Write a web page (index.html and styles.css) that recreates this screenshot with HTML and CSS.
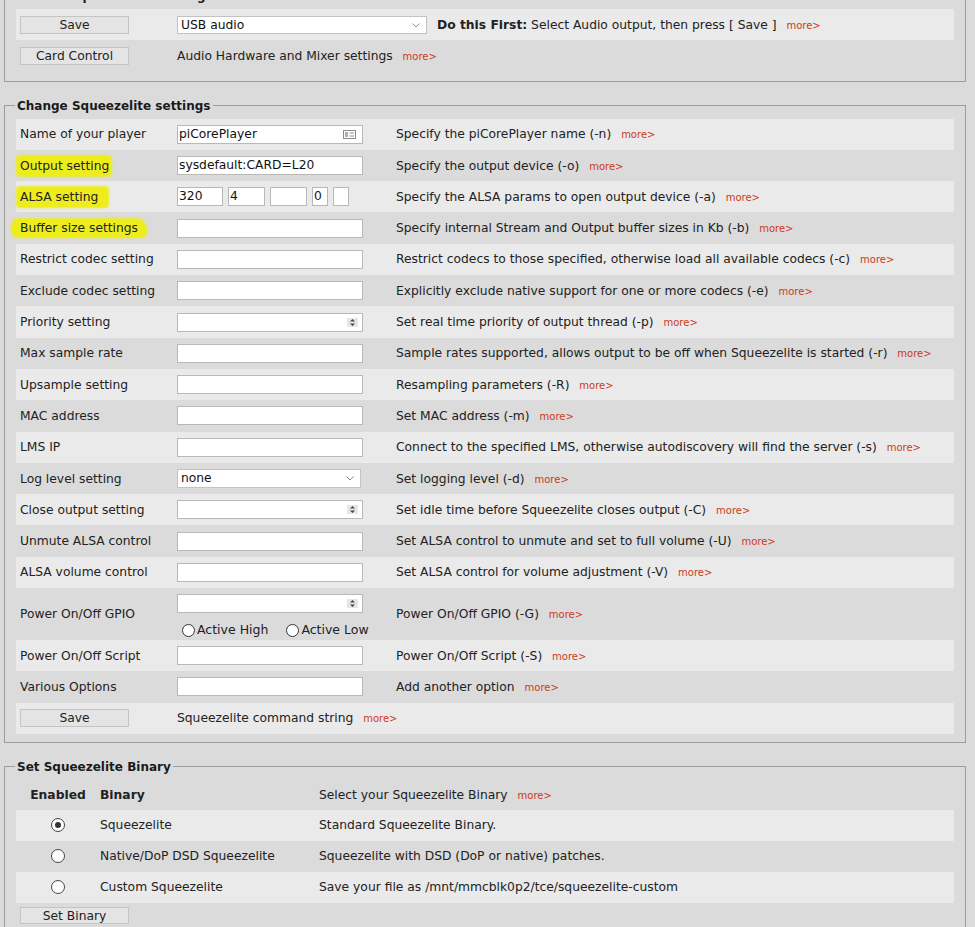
FILE: index.html
```html
<!DOCTYPE html>
<html>
<head>
<meta charset="utf-8">
<link rel="stylesheet" href="styles.css">
</head>
<body>
<div class="page">

<fieldset class="box first">
  <legend>Audio output device settings</legend>
  <div class="row light top1">
    <div class="cell lbl"><button class="btn">Save</button></div>
    <div class="cell"><div class="select wide"><span>USB audio</span><svg class="chev" width="8" height="5" viewBox="0 0 8 5"><path d="M0.5 0.5 L4 4 L7.5 0.5" fill="none" stroke="#8a8a8a" stroke-width="1"/></svg></div></div>
    <div class="cell desc"><b>Do this First:</b>&nbsp;Select Audio output, then press [ Save ] <a class="more">more&gt;</a></div>
  </div>
  <div class="row top2">
    <div class="cell lbl"><button class="btn">Card Control</button></div>
    <div class="cell desc0">Audio Hardware and Mixer settings <a class="more">more&gt;</a></div>
  </div>
</fieldset>

<fieldset class="box">
  <legend>Change Squeezelite settings</legend>
  <div class="row light">
    <div class="cell lbl">Name of your player</div>
    <div class="cell"><div class="inp has-icon"><span>piCorePlayer</span><svg class="ico" width="13" height="9" viewBox="0 0 13 9"><rect x="0.5" y="0.5" width="12" height="8" fill="none" stroke="#8c8c8c"/><rect x="2" y="2" width="3" height="5" fill="#b0b0b0"/><path d="M6.5 3h4.5M6.5 6h4.5" stroke="#8c8c8c"/></svg></div></div>
    <div class="cell desc">Specify the piCorePlayer name (-n) <a class="more">more&gt;</a></div>
  </div>
  <div class="row">
    <div class="cell lbl"><span class="hl">Output setting</span></div>
    <div class="cell"><div class="inp"><span>sysdefault:CARD=L20</span></div></div>
    <div class="cell desc">Specify the output device (-o) <a class="more">more&gt;</a></div>
  </div>
  <div class="row light">
    <div class="cell lbl"><span class="hl hl2">ALSA setting</span></div>
    <div class="cell alsa">
      <div class="inp a1"><span>320</span></div>
      <div class="inp a2"><span>4</span></div>
      <div class="inp a3"></div>
      <div class="inp a4"><span>0</span></div>
      <div class="inp a5"></div>
    </div>
    <div class="cell desc">Specify the ALSA params to open output device (-a) <a class="more">more&gt;</a></div>
  </div>
  <div class="row">
    <div class="cell lbl"><span class="hl hl3">Buffer size settings</span></div>
    <div class="cell"><div class="inp"></div></div>
    <div class="cell desc">Specify internal Stream and Output buffer sizes in Kb (-b) <a class="more">more&gt;</a></div>
  </div>
  <div class="row light">
    <div class="cell lbl">Restrict codec setting</div>
    <div class="cell"><div class="inp"></div></div>
    <div class="cell desc">Restrict codecs to those specified, otherwise load all available codecs (-c) <a class="more">more&gt;</a></div>
  </div>
  <div class="row">
    <div class="cell lbl">Exclude codec setting</div>
    <div class="cell"><div class="inp"></div></div>
    <div class="cell desc">Explicitly exclude native support for one or more codecs (-e) <a class="more">more&gt;</a></div>
  </div>
  <div class="row light">
    <div class="cell lbl">Priority setting</div>
    <div class="cell"><div class="inp num"><svg class="spin" width="11" height="9" viewBox="0 0 11 9"><rect x="0" y="0" width="11" height="9" fill="#e6e6e6"/><path d="M3 3.5 L5.5 1 L8 3.5Z M3 5.5 L5.5 8 L8 5.5Z" fill="#444"/></svg></div></div>
    <div class="cell desc">Set real time priority of output thread (-p) <a class="more">more&gt;</a></div>
  </div>
  <div class="row">
    <div class="cell lbl">Max sample rate</div>
    <div class="cell"><div class="inp"></div></div>
    <div class="cell desc">Sample rates supported, allows output to be off when Squeezelite is started (-r) <a class="more">more&gt;</a></div>
  </div>
  <div class="row light">
    <div class="cell lbl">Upsample setting</div>
    <div class="cell"><div class="inp"></div></div>
    <div class="cell desc">Resampling parameters (-R) <a class="more">more&gt;</a></div>
  </div>
  <div class="row">
    <div class="cell lbl">MAC address</div>
    <div class="cell"><div class="inp"></div></div>
    <div class="cell desc">Set MAC address (-m) <a class="more">more&gt;</a></div>
  </div>
  <div class="row light">
    <div class="cell lbl">LMS IP</div>
    <div class="cell"><div class="inp"></div></div>
    <div class="cell desc">Connect to the specified LMS, otherwise autodiscovery will find the server (-s) <a class="more">more&gt;</a></div>
  </div>
  <div class="row">
    <div class="cell lbl">Log level setting</div>
    <div class="cell"><div class="select loglvl"><span>none</span><svg class="chev" width="8" height="5" viewBox="0 0 8 5"><path d="M0.5 0.5 L4 4 L7.5 0.5" fill="none" stroke="#8a8a8a" stroke-width="1"/></svg></div></div>
    <div class="cell desc">Set logging level (-d) <a class="more">more&gt;</a></div>
  </div>
  <div class="row light">
    <div class="cell lbl">Close output setting</div>
    <div class="cell"><div class="inp num"><svg class="spin" width="11" height="9" viewBox="0 0 11 9"><rect x="0" y="0" width="11" height="9" fill="#e6e6e6"/><path d="M3 3.5 L5.5 1 L8 3.5Z M3 5.5 L5.5 8 L8 5.5Z" fill="#444"/></svg></div></div>
    <div class="cell desc">Set idle time before Squeezelite closes output (-C) <a class="more">more&gt;</a></div>
  </div>
  <div class="row">
    <div class="cell lbl">Unmute ALSA control</div>
    <div class="cell"><div class="inp"></div></div>
    <div class="cell desc">Set ALSA control to unmute and set to full volume (-U) <a class="more">more&gt;</a></div>
  </div>
  <div class="row light">
    <div class="cell lbl">ALSA volume control</div>
    <div class="cell"><div class="inp"></div></div>
    <div class="cell desc">Set ALSA control for volume adjustment (-V) <a class="more">more&gt;</a></div>
  </div>
  <div class="row tall">
    <div class="cell lbl">Power On/Off GPIO</div>
    <div class="cell gpio">
      <div class="inp num"><svg class="spin" width="11" height="9" viewBox="0 0 11 9"><rect x="0" y="0" width="11" height="9" fill="#e6e6e6"/><path d="M3 3.5 L5.5 1 L8 3.5Z M3 5.5 L5.5 8 L8 5.5Z" fill="#444"/></svg></div>
      <div class="radios">
        <span class="ropt"><span class="radio"></span>Active High</span>
        <span class="ropt"><span class="radio"></span>Active Low</span>
      </div>
    </div>
    <div class="cell desc">Power On/Off GPIO (-G) <a class="more">more&gt;</a></div>
  </div>
  <div class="row light">
    <div class="cell lbl">Power On/Off Script</div>
    <div class="cell"><div class="inp"></div></div>
    <div class="cell desc">Power On/Off Script (-S) <a class="more">more&gt;</a></div>
  </div>
  <div class="row">
    <div class="cell lbl">Various Options</div>
    <div class="cell"><div class="inp"></div></div>
    <div class="cell desc">Add another option <a class="more">more&gt;</a></div>
  </div>
  <div class="row light">
    <div class="cell lbl"><button class="btn">Save</button></div>
    <div class="cell desc0 wide-desc">Squeezelite command string <a class="more">more&gt;</a></div>
  </div>
</fieldset>

<fieldset class="box last">
  <legend>Set Squeezelite Binary</legend>
  <div class="brow head">
    <div class="bc en"><b>Enabled</b></div>
    <div class="bc"><b>Binary</b></div>
    <div class="bc bdesc">Select your Squeezelite Binary <a class="more">more&gt;</a></div>
  </div>
  <div class="brow light">
    <div class="bc en"><span class="radio big checked"></span></div>
    <div class="bc">Squeezelite</div>
    <div class="bc bdesc">Standard Squeezelite Binary.</div>
  </div>
  <div class="brow">
    <div class="bc en"><span class="radio big"></span></div>
    <div class="bc">Native/DoP DSD Squeezelite</div>
    <div class="bc bdesc">Squeezelite with DSD (DoP or native) patches.</div>
  </div>
  <div class="brow light">
    <div class="bc en"><span class="radio big"></span></div>
    <div class="bc">Custom Squeezelite</div>
    <div class="bc bdesc">Save your file as /mnt/mmcblk0p2/tce/squeezelite-custom</div>
  </div>
  <div class="setbin"><button class="btn">Set Binary</button></div>
</fieldset>

</div>
</body>
</html>
```
FILE: styles.css
```css
html, body {
  margin: 0;
  padding: 0;
  background: #dbdbdb;
}
body {
  font-family: "DejaVu Sans", Verdana, sans-serif;
  font-size: 12.3px;
  color: #222;
  overflow: hidden;
}
.page {
  width: 962px;
  margin: -12px 0 0 4px;
}
.box {
  margin: 0 0 16px;
  padding: 5px 11px 8px;
  border: 1px solid #9d9d9d;
  min-width: 0;
}
.box.first {
  padding-bottom: 9px;
}
.box legend {
  font-weight: bold;
  font-size: 12px;
  line-height: 16px;
  padding: 0 2px;
  margin-left: -1px;
  color: #1a1a1a;
}
.row {
  display: grid;
  grid-template-columns: 161px 215px 1fr;
  align-items: center;
  height: 31.3px;
}
.row.light, .brow.light {
  background: #eaeaea;
}
.row.top1 {
  grid-template-columns: 161px 256px 1fr;
}
.row.top2 {
  grid-template-columns: 161px 1fr;
}
.row.tall {
  height: 52px;
}
.cell {
  white-space: nowrap;
}
.lbl {
  padding-left: 4px;
}
.desc {
  padding-left: 4px;
}
.desc0 {
  padding-left: 0;
}
.more {
  color: #cc3a1a;
  font-size: 10px;
  margin-left: 6px;
}
.btn {
  width: 109px;
  height: 18px;
  padding: 0;
  margin: 0;
  font-family: "DejaVu Sans", Verdana, sans-serif;
  font-size: 12.3px;
  color: #222;
  background: #e4e4e4;
  border: 1px solid #c4c4c4;
  border-radius: 0;
  line-height: 16px;
}
.inp, .select {
  position: relative;
  box-sizing: border-box;
  width: 186px;
  height: 19px;
  background: #fff;
  border: 1px solid #b8b8b8;
  font-size: 12.3px;
  line-height: 17px;
  padding-left: 1px;
  color: #111;
  overflow: hidden;
}
.select {
  padding-left: 3px;
  border-color: #c2c2c2;
}
.select.wide {
  width: 250px;
  height: 18px;
  line-height: 16px;
}
.select.loglvl {
  width: 184px;
}
.chev {
  position: absolute;
  right: 6px;
  top: 6px;
}
.ico {
  position: absolute;
  right: 6px;
  top: 4px;
}
.spin {
  position: absolute;
  right: 4px;
  top: 4px;
}
.alsa {
  display: flex;
  gap: 5px;
}
.alsa .inp { width: auto; }
.alsa .a1 { width: 46px; }
.alsa .a2 { width: 37px; }
.alsa .a3 { width: 37px; }
.alsa .a4 { width: 16px; }
.alsa .a5 { width: 16px; }
.hl {
  background: #eded1e;
  padding: 3px 2px 3px 3px;
  margin-left: -3px;
  border-radius: 3px;
  box-shadow: 0 0 2px 1px #eded1e;
}
.hl2 { padding-right: 10px; }
.hl3 {
  padding: 2px 8px 2px 8px;
  margin-left: -8px;
  border-radius: 6px 10px 4px 6px;
}
.gpio {
  align-self: start;
  padding-top: 6px;
}
.radios {
  display: flex;
  gap: 18px;
  padding-left: 5px;
  margin-top: 9px;
  font-size: 12.5px;
  line-height: 16px;
}
.ropt {
  display: inline-flex;
  align-items: center;
  gap: 2px;
}
.radio {
  display: inline-block;
  box-sizing: border-box;
  width: 13px;
  height: 13px;
  border: 1px solid #333;
  border-radius: 50%;
  background: #fff;
}
.radio.big {
  width: 14px;
  height: 14px;
  border-color: #444;
  position: relative;
}
.radio.checked::after {
  content: "";
  position: absolute;
  left: 3px;
  top: 3px;
  width: 6px;
  height: 6px;
  border-radius: 50%;
  background: #333;
}
.brow {
  display: grid;
  grid-template-columns: 84px 215px 1fr;
  align-items: center;
  height: 31px;
}
.brow.head {
  height: 30px;
}
.bc {
  white-space: nowrap;
}
.bc.en {
  display: flex;
  justify-content: center;
}
.bdesc {
  padding-left: 4px;
}
.setbin {
  padding: 4px 0 0 4px;
}
.setbin .btn {
  height: 17px;
}
```
